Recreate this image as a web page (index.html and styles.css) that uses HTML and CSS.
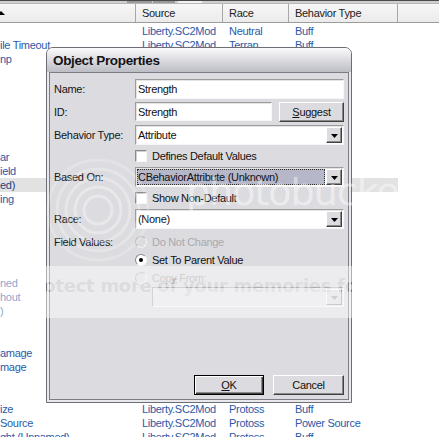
FILE: index.html
```html
<!DOCTYPE html>
<html>
<head>
<meta charset="utf-8">
<link rel="stylesheet" href="styles.css">
</head>
<body>
<div class="screen">
  <div class="topstrip"><span class="tb tb1"></span><span class="tb tb2"></span><span class="tb tb3"></span></div>
  <div class="list">
    <div class="hdr">
      <div class="hc c0"><span class="sort"></span></div>
      <div class="hc c1">Source</div>
      <div class="hc c2">Race</div>
      <div class="hc c3">Behavior Type</div>
      <div class="hc c4"></div>
    </div>
    <div class="rows">
      <div class="row"><span class="c0"></span><span class="c1">Liberty.SC2Mod</span><span class="c2">Neutral</span><span class="c3">Buff</span></div>
      <div class="row"><span class="c0">ile Timeout</span><span class="c1">Liberty.SC2Mod</span><span class="c2">Terran</span><span class="c3">Buff</span></div>
      <div class="row"><span class="c0">np</span><span class="c1">Liberty.SC2Mod</span><span class="c2">Terran</span><span class="c3">Buff</span></div>
      <div class="row"><span class="c0"></span><span class="c1">Liberty.SC2Mod</span><span class="c2">Terran</span><span class="c3">Buff</span></div>
      <div class="row"><span class="c0"></span><span class="c1">Liberty.SC2Mod</span><span class="c2">Terran</span><span class="c3">Buff</span></div>
      <div class="row"><span class="c0"></span><span class="c1">Liberty.SC2Mod</span><span class="c2">Terran</span><span class="c3">Buff</span></div>
      <div class="row"><span class="c0"></span><span class="c1">Liberty.SC2Mod</span><span class="c2">Zerg</span><span class="c3">Buff</span></div>
      <div class="row"><span class="c0"></span><span class="c1">Liberty.SC2Mod</span><span class="c2">Zerg</span><span class="c3">Buff</span></div>
      <div class="row"><span class="c0"></span><span class="c1">Liberty.SC2Mod</span><span class="c2">Zerg</span><span class="c3">Buff</span></div>
      <div class="row"><span class="c0">ar</span><span class="c1">Liberty.SC2Mod</span><span class="c2">Zerg</span><span class="c3">Buff</span></div>
      <div class="row"><span class="c0">ield</span><span class="c1">Liberty.SC2Mod</span><span class="c2">Protoss</span><span class="c3">Buff</span></div>
      <div class="row sel"><span class="c0">ed)</span><span class="c1">Liberty.SC2Mod</span><span class="c2">Protoss</span><span class="c3">Buff</span></div>
      <div class="row"><span class="c0">ing</span><span class="c1">Liberty.SC2Mod</span><span class="c2">Protoss</span><span class="c3">Buff</span></div>
      <div class="row"><span class="c0"></span><span class="c1">Liberty.SC2Mod</span><span class="c2">Protoss</span><span class="c3">Buff</span></div>
      <div class="row"><span class="c0"></span><span class="c1">Liberty.SC2Mod</span><span class="c2">Protoss</span><span class="c3">Buff</span></div>
      <div class="row"><span class="c0"></span><span class="c1">Liberty.SC2Mod</span><span class="c2">Protoss</span><span class="c3">Buff</span></div>
      <div class="row"><span class="c0"></span><span class="c1">Liberty.SC2Mod</span><span class="c2">Protoss</span><span class="c3">Buff</span></div>
      <div class="row"><span class="c0"></span><span class="c1">Liberty.SC2Mod</span><span class="c2">Protoss</span><span class="c3">Buff</span></div>
      <div class="row"><span class="c0">ned</span><span class="c1">Liberty.SC2Mod</span><span class="c2">Protoss</span><span class="c3">Buff</span></div>
      <div class="row"><span class="c0">hout</span><span class="c1">Liberty.SC2Mod</span><span class="c2">Protoss</span><span class="c3">Buff</span></div>
      <div class="row"><span class="c0">)</span><span class="c1">Liberty.SC2Mod</span><span class="c2">Protoss</span><span class="c3">Buff</span></div>
      <div class="row"><span class="c0"></span><span class="c1">Liberty.SC2Mod</span><span class="c2">Protoss</span><span class="c3">Buff</span></div>
      <div class="row"><span class="c0"></span><span class="c1">Liberty.SC2Mod</span><span class="c2">Protoss</span><span class="c3">Buff</span></div>
      <div class="row"><span class="c0">amage</span><span class="c1">Liberty.SC2Mod</span><span class="c2">Protoss</span><span class="c3">Buff</span></div>
      <div class="row"><span class="c0">mage</span><span class="c1">Liberty.SC2Mod</span><span class="c2">Protoss</span><span class="c3">Buff</span></div>
      <div class="row"><span class="c0"></span><span class="c1">Liberty.SC2Mod</span><span class="c2">Protoss</span><span class="c3">Buff</span></div>
      <div class="row"><span class="c0"></span><span class="c1">Liberty.SC2Mod</span><span class="c2">Protoss</span><span class="c3">Buff</span></div>
      <div class="row"><span class="c0">ize</span><span class="c1">Liberty.SC2Mod</span><span class="c2">Protoss</span><span class="c3">Buff</span></div>
      <div class="row"><span class="c0">Source</span><span class="c1">Liberty.SC2Mod</span><span class="c2">Protoss</span><span class="c3">Power Source</span></div>
      <div class="row"><span class="c0">ght (Unnamed)</span><span class="c1">Liberty.SC2Mod</span><span class="c2">Protoss</span><span class="c3">Buff</span></div>
    </div>
  </div>

  <div class="dialog">
    <div class="titlebar">Object Properties</div>
    <div class="frame">
      <div class="panel">
        <div class="frow r-name"><span class="lbl">Name:</span><div class="edit edit-full">Strength</div></div>
        <div class="frow r-id"><span class="lbl">ID:</span><div class="edit edit-id">Strength</div><div class="btn btn-suggest"><u>S</u>uggest</div></div>
        <div class="frow r-combo"><span class="lbl">Behavior Type:</span>
          <div class="combo"><span class="ctext">Attribute</span><span class="drop"><svg width="7" height="4" viewBox="0 0 7 4"><polygon points="0,0 7,0 3.5,4" fill="#000"/></svg></span></div>
        </div>
        <div class="frow r-check"><span class="lbl"></span><span class="check"></span><span class="opt">Defines Default Values</span></div>
        <div class="frow r-combo"><span class="lbl">Based On:</span>
          <div class="combo"><span class="ctext focus">CBehaviorAttribute (Unknown)</span><span class="drop"><svg width="7" height="4" viewBox="0 0 7 4"><polygon points="0,0 7,0 3.5,4" fill="#000"/></svg></span></div>
        </div>
        <div class="frow r-check"><span class="lbl"></span><span class="check"></span><span class="opt">Show Non-Default</span></div>
        <div class="frow r-combo"><span class="lbl">Race:</span>
          <div class="combo"><span class="ctext">(None)</span><span class="drop"><svg width="7" height="4" viewBox="0 0 7 4"><polygon points="0,0 7,0 3.5,4" fill="#000"/></svg></span></div>
        </div>
        <div class="frow r-radio r-first"><span class="lbl">Field Values:</span><span class="radio off"></span><span class="opt dis">Do Not Change</span></div>
        <div class="frow r-radio"><span class="lbl"></span><span class="radio on"><span class="dot"></span></span><span class="opt">Set To Parent Value</span></div>
        <div class="frow r-radio"><span class="lbl"></span><span class="radio off"></span><span class="opt dis">Copy From:</span></div>
        <div class="frow r-copy"><span class="lbl"></span><span class="indent"></span>
          <div class="combo combo-dis"><span class="ctext"></span><span class="drop"><svg width="7" height="4" viewBox="0 0 7 4"><polygon points="0,0 7,0 3.5,4" fill="#a8a8a8"/></svg></span></div>
        </div>
        <div class="btnrow">
          <div class="btn btn-ok"><u>O</u>K</div>
          <div class="btn btn-cancel">Cancel</div>
        </div>
      </div>
    </div>
  </div>

  <svg class="wm-rings" width="120" height="120" viewBox="0 0 120 120">
    <circle cx="60" cy="60" r="14" fill="none" stroke="#fff" stroke-width="3" opacity="0.35"/>
    <circle cx="60" cy="60" r="23" fill="none" stroke="#fff" stroke-width="3" opacity="0.35"/>
    <circle cx="60" cy="60" r="32" fill="none" stroke="#fff" stroke-width="3" opacity="0.3"/>
    <circle cx="60" cy="60" r="41" fill="none" stroke="#fff" stroke-width="3" opacity="0.25"/>
    <circle cx="60" cy="60" r="50" fill="none" stroke="#fff" stroke-width="3" opacity="0.2"/>
  </svg>
  <div class="wm-logo">photobucket</div>
  <svg class="wm-band" width="439" height="52" viewBox="0 0 439 52">
    <defs>
      <mask id="wmMask">
        <rect x="0" y="0" width="439" height="52" fill="#fff"/>
        <text x="22" y="26" font-family="DejaVu Sans, sans-serif" font-weight="bold" font-size="18" fill="#000">Protect more of your memories for less!</text>
      </mask>
    </defs>
    <rect x="0" y="0" width="439" height="52" fill="#fff" fill-opacity="0.45" mask="url(#wmMask)"/>
  </svg>
</div>
</body>
</html>
```

FILE: styles.css
```css
html, body {
  margin: 0;
  padding: 0;
  background: #fff;
}
body {
  width: 439px;
  height: 437px;
  overflow: hidden;
  font-family: "Liberation Sans", Arial, sans-serif;
  font-size: 11px;
  letter-spacing: -0.3px;
  color: #111;
}
.screen {
  position: relative;
  width: 439px;
  height: 437px;
  overflow: hidden;
}

/* top toolbar remnant */
.topstrip {
  height: 3px;
  background: #cfcfcf;
  border-top: 1px solid #4a4a4a;
  box-sizing: border-box;
  display: flex;
}
.tb {
  height: 2px;
  background: #9a9a9a;
}
.tb1 { margin-left: 127px; width: 25px; }
.tb2 { margin-left: 1px; width: 22px; }
.tb3 { margin-left: 3px; width: 24px; background: #f2f2f2; }

/* list view */
.hdr {
  display: flex;
  height: 20px;
  box-sizing: border-box;
  border-top: 1px solid #b8b8b8;
  border-bottom: 1px solid #9c9c9c;
  background: linear-gradient(#f7f7f7, #ebebeb);
  color: #222;
}
.hc {
  box-sizing: border-box;
  border-right: 1px solid #a8a8a8;
  padding: 2px 0 0 6px;
  line-height: 14px;
}
.hdr .c0 { width: 136px; padding-left: 0; position: relative; }
.hdr .c1 { width: 87px; }
.hdr .c2 { width: 66px; }
.hdr .c3 { width: 109px; }
.hdr .c4 { flex: 1; border-right: none; }
.sort {
  position: absolute;
  left: -3px;
  top: 7px;
  width: 0;
  height: 0;
  border-left: 4px solid transparent;
  border-right: 4px solid transparent;
  border-bottom: 4px solid #000;
}
.rows {
  padding-top: 1px;
}
.row {
  display: flex;
  height: 14px;
  line-height: 14px;
  color: #2a5aa8;
  white-space: nowrap;
}
.row.sel { background: #e2e2e2; width: 398px; }
.row.sel .c0 { color: #1c3f80; }
.row span { overflow: hidden; box-sizing: border-box; }
.row .c0 { width: 136px; }
.row .c1 { width: 87px; padding-left: 6px; }
.row .c2 { width: 66px; padding-left: 6px; }
.row .c3 { width: 109px; padding-left: 6px; }

/* dialog */
.dialog {
  position: absolute;
  left: 46px;
  top: 47px;
  width: 306px;
  height: 356px;
  box-sizing: border-box;
  border: 1px solid #6d6d76;
  border-radius: 7px 7px 0 0;
  background: #e9e9ed;
  overflow: hidden;
}
.titlebar {
  height: 24px;
  line-height: 25px;
  padding-left: 6px;
  font-weight: bold;
  font-size: 13.5px;
  letter-spacing: -0.35px;
  color: #141414;
  background: linear-gradient(#fbfbfd, #dedee3 45%, #bdbdc5);
}
.frame {
  padding: 0 2px 2px 2px;
}
.panel {
  box-sizing: border-box;
  height: 328px;
  border: 1px solid #7c7c85;
  background: #dcdce0;
  padding: 0 4px 4px 4px;
  display: flex;
  flex-direction: column;
}
.frow {
  display: flex;
  align-items: center;
  height: 20px;
  flex-shrink: 0;
}
.lbl {
  width: 81px;
  flex-shrink: 0;
  color: #151515;
}
.r-name { margin-top: 6px; }
.r-id { margin-top: 3px; }
.r-combo { margin-top: 3px; }
.r-check + .r-combo { margin-top: 1px; }
.r-check { margin-top: 1px; }
.r-radio { height: 18px; }
.r-first { margin-top: 4px; }

.edit {
  box-sizing: border-box;
  height: 20px;
  line-height: 18px;
  padding-left: 2px;
  background: #fff;
  border: 1px solid;
  border-color: #9c9c9c #f6f6f6 #f6f6f6 #9c9c9c;
  box-shadow: inset 1px 1px 0 #e4e4e4;
  color: #111;
}
.edit-full { width: 209px; }
.edit-id { width: 137px; height: 19px; align-self: flex-start; margin-right: 7px; }

.btn {
  box-sizing: border-box;
  height: 20px;
  line-height: 18px;
  text-align: center;
  background: #dcdce0;
  border: 1px solid;
  border-color: #ffffff #404040 #404040 #ffffff;
  box-shadow: inset -1px -1px 0 #8a8a8a;
  color: #111;
}
.btn-suggest { width: 65px; }

.combo {
  box-sizing: border-box;
  width: 209px;
  height: 20px;
  display: flex;
  align-items: center;
  background: #fff;
  border: 1px solid;
  border-color: #9c9c9c #f6f6f6 #f6f6f6 #9c9c9c;
  box-shadow: inset 1px 1px 0 #e4e4e4;
  padding: 1px;
}
.ctext {
  flex: 1;
  height: 16px;
  line-height: 16px;
  padding-left: 1px;
  white-space: nowrap;
  overflow: hidden;
  color: #111;
}
.ctext.focus {
  background: #b7b7ca;
  outline: 1px dotted #2a2a2a;
  outline-offset: -1px;
  margin-right: 1px;
}
.drop {
  box-sizing: border-box;
  width: 16px;
  height: 16px;
  display: flex;
  align-items: center;
  justify-content: center;
  background: #dcdce0;
  border: 1px solid;
  border-color: #ffffff #404040 #404040 #ffffff;
  box-shadow: inset -1px -1px 0 #8a8a8a;
}
.drop svg { display: block; margin-top: 1px; }

.check {
  box-sizing: border-box;
  width: 12px;
  height: 12px;
  background: #fff;
  border: 1px solid;
  border-color: #8a8a8a #f6f6f6 #f6f6f6 #8a8a8a;
  box-shadow: inset 1px 1px 0 #cfcfcf;
  margin-right: 5px;
}
.opt { color: #111; white-space: nowrap; }
.opt.dis { color: #a9a9ad; }

.radio {
  box-sizing: border-box;
  width: 12px;
  height: 12px;
  border-radius: 50%;
  border: 1px solid;
  border-color: #8a8a8a #f8f8f8 #f8f8f8 #8a8a8a;
  background: #fff;
  margin-right: 5px;
  display: flex;
  align-items: center;
  justify-content: center;
}
.radio.off {
  background: #dcdce0;
  border-color: #b4b4b8 #f4f4f4 #f4f4f4 #b4b4b8;
}
.dot {
  width: 4px;
  height: 4px;
  border-radius: 50%;
  background: #000;
}
.r-copy { height: 20px; }
.indent { width: 17px; flex-shrink: 0; }
.combo-dis {
  width: 192px;
  background: #e4e4e7;
  border-color: #b0b0b4 #f4f4f4 #f4f4f4 #b0b0b4;
  box-shadow: none;
}
.combo-dis .drop {
  border-color: #f4f4f4 #a0a0a4 #a0a0a4 #f4f4f4;
  box-shadow: none;
}

.btnrow {
  margin-top: auto;
  display: flex;
  justify-content: flex-end;
  gap: 9px;
}
.btn-ok {
  width: 70px;
  border: 1px solid #000;
  box-shadow: inset 1px 1px 0 #fff, inset -1px -1px 0 #404040, inset -2px -2px 0 #8a8a8a;
}
.btn-cancel { width: 71px; }

/* photobucket watermark overlay */
.wm-rings {
  position: absolute;
  left: 38px;
  top: 150px;
  pointer-events: none;
}
.wm-logo {
  position: absolute;
  left: 186px;
  top: 170px;
  font-family: "DejaVu Sans", sans-serif;
  font-size: 38px;
  letter-spacing: -1px;
  color: rgba(255, 255, 255, 0.45);
  pointer-events: none;
}
.wm-band {
  position: absolute;
  left: 0;
  top: 266px;
  pointer-events: none;
}
```
